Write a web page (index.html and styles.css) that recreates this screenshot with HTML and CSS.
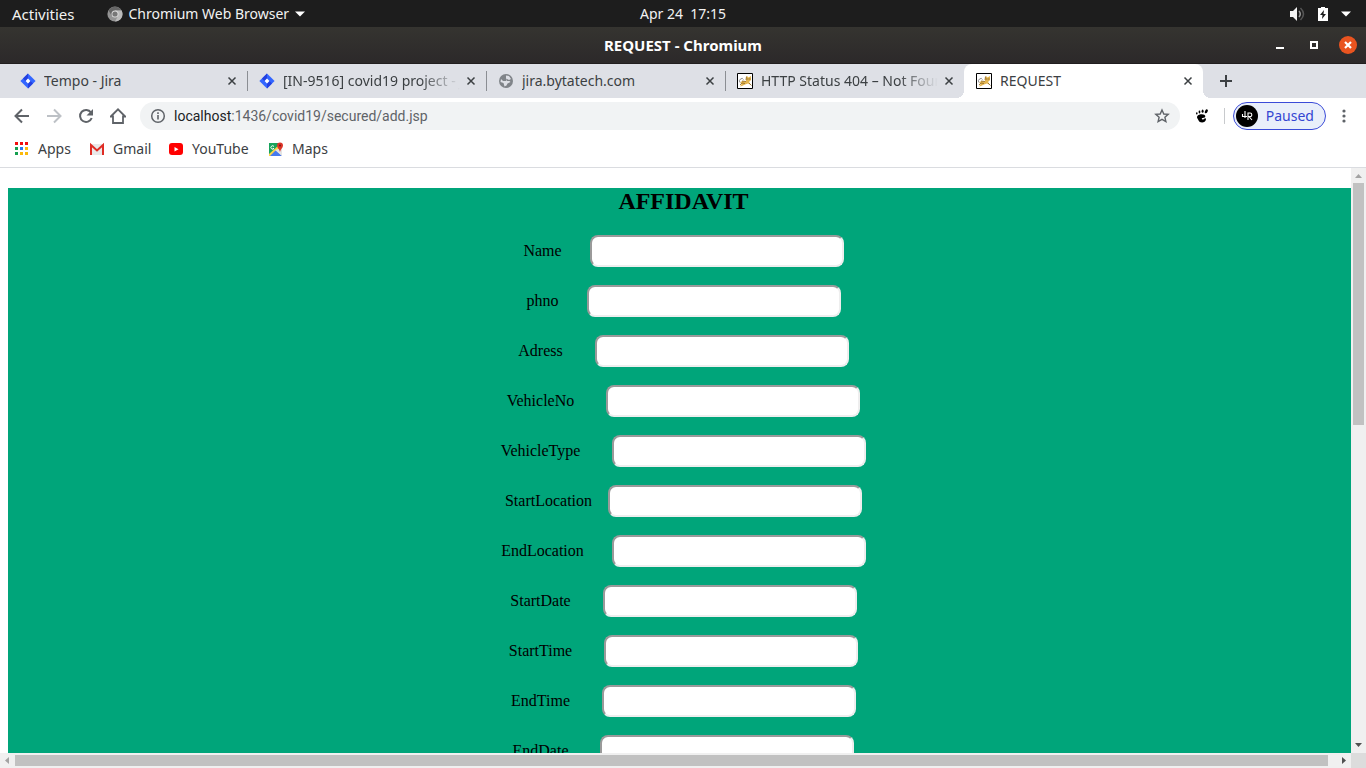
FILE: index.html
```html
<!DOCTYPE html>
<html lang="en">
<head>
<meta charset="utf-8">
<title>REQUEST</title>
<link rel="stylesheet" href="styles.css">
</head>
<body>
<svg class="defs" aria-hidden="true">
  <symbol id="close" viewBox="0 0 10 10"><path d="M1.500 1.500l7 7M8.500 1.500l-7 7" stroke="currentColor" stroke-width="1.500" fill="none"/></symbol>
  <symbol id="jira" viewBox="0 0 16 16"><path d="M8 .4L15.6 8 8 15.6.4 8z" fill="#3366ff"/><path d="M8 .4v5L5.4 8 3 5.4zM8 15.6v-5L10.6 8l2.4 2.600z" fill="#2440e0"/><path d="M8 5.600L10.400 8 8 10.400 5.600 8z" fill="#fff"/></symbol>
  <symbol id="tomcat" viewBox="0 0 16 16"><path d="M.5.5h15v15H.5z" fill="#fff" stroke="#000"/><path d="M3 10l2-2 4 .5V5l1-2 1.500 1.500L14 3v4l-2 2 2 3-3-1.500-3 1-3 1.500-2 .5L5 10.500z" fill="#e5b650"/><path d="M3 12l2-2 3 .5M12 10l2.500 2.500M9 8.500l-4-.5M9.500 3.500L9 7" stroke="#8a6420" stroke-width=".8" fill="none"/><path d="M3 9.500Q1.500 7.500 3.500 6t3 .5" stroke="#8b8b8b" fill="none"/><path d="M10.500 6h.8M12.500 6h.8" stroke="#4a3a1c"/></symbol>
</svg>

<header class="panel">
  <button class="panel-btn activities" type="button">Activities</button>
  <button class="panel-btn panel-app" type="button">
    <svg width="16" height="16" viewBox="0 0 16 16"><circle cx="8" cy="8" r="7.600" fill="#949494"/><path d="M1.400 4.500A7.600 7.600 0 0 1 14.600 4.500H8L5 10z" fill="#666"/><path d="M14.600 4.500A7.600 7.600 0 0 1 8 15.600L11 10 8 4.500z" fill="#bbb"/><circle cx="8" cy="8" r="3.500" fill="#ddd"/><circle cx="8" cy="8" r="2.600" fill="#777"/></svg>
    <span>Chromium Web Browser</span>
    <svg width="10" height="6" viewBox="0 0 10 6"><path d="M0 .5h10L5 5.500z" fill="#fff"/></svg>
  </button>
  <time class="clock">Apr 24&nbsp; 17:15</time>
  <div class="status">
    <svg width="16" height="16" viewBox="0 0 16 16"><path d="M1 5h3l4-4v14l-4-4H1z" fill="#f4f4f4"/><path d="M10 5q2.500 3 0 6" stroke="#999" stroke-width="1.500" fill="none"/><path d="M11.500 2q6 6 0 12" stroke="#555" stroke-width="1.500" fill="none"/></svg>
    <svg width="10" height="14" viewBox="0 0 10 14"><path d="M0 1h3V0h4v1h3v13H0z" fill="#fff"/><path d="M6 3L2 8h2.500L4 12l4-5H5.500z" fill="#1d1d1d"/></svg>
    <svg width="10" height="6" viewBox="0 0 10 6"><path d="M0 .5h10L5 5.500z" fill="#fff"/></svg>
  </div>
</header>

<div class="titlebar">
  <strong class="window-title">REQUEST - Chromium</strong>
  <div class="window-controls">
    <button type="button" aria-label="Minimize"><svg width="8" height="8" viewBox="0 0 8 8"><path d="M0 6h8v2H0z" fill="#fff"/></svg></button>
    <button type="button" aria-label="Maximize"><svg width="8" height="8" viewBox="0 0 8 8"><path d="M1 1h6v6H1z" stroke="#fff" stroke-width="2" fill="none"/></svg></button>
    <button class="window-close" type="button" aria-label="Close window"><svg width="8" height="8" viewBox="0 0 8 8"><path d="M1 1l6 6M7 1L1 7" stroke="#fff" stroke-width="2.200"/></svg></button>
  </div>
</div>

<nav class="tabs" aria-label="Tabs">
  <div class="tab"><svg class="fav"><use href="#jira"/></svg><span class="tab-title">Tempo - Jira</span><button type="button" aria-label="Close tab"><svg class="x"><use href="#close"/></svg></button></div>
  <div class="tab"><svg class="fav"><use href="#jira"/></svg><span class="tab-title faded">[IN-9516] covid19 project - Jira</span><button type="button" aria-label="Close tab"><svg class="x"><use href="#close"/></svg></button></div>
  <div class="tab"><svg class="fav" viewBox="0 0 16 16"><circle cx="8" cy="8" r="7" fill="#808489"/><path d="M8 2.500l3 .5 2 3-2 1-2-1-1 2H5L3 6 2.500 9l3 1 1 3.500 2-1 1-2 3-1.500-1-1H9L8 5z" fill="#dee0e6"/></svg><span class="tab-title">jira.bytatech.com</span><button type="button" aria-label="Close tab"><svg class="x"><use href="#close"/></svg></button></div>
  <div class="tab"><svg class="fav"><use href="#tomcat"/></svg><span class="tab-title faded">HTTP Status 404 – Not Found</span><button type="button" aria-label="Close tab"><svg class="x"><use href="#close"/></svg></button></div>
  <div class="tab active"><svg class="fav"><use href="#tomcat"/></svg><span class="tab-title">REQUEST</span><button type="button" aria-label="Close tab"><svg class="x"><use href="#close"/></svg></button></div>
  <button class="new-tab" type="button" aria-label="New tab"><svg width="12" height="12" viewBox="0 0 12 12"><path d="M6 0v12M0 6h12" stroke="#3c4043" stroke-width="2"/></svg></button>
</nav>

<div class="toolbar">
  <div class="nav-buttons">
    <button type="button" aria-label="Back"><svg width="16" height="16" viewBox="0 0 16 16"><path d="M15 8H2M8 1.500L1.500 8 8 14.500" stroke="#5f6368" stroke-width="2" fill="none"/></svg></button>
    <button type="button" aria-label="Forward"><svg width="16" height="16" viewBox="0 0 16 16"><path d="M1 8h13M8 1.500L14.500 8 8 14.500" stroke="#bdc1c6" stroke-width="2" fill="none"/></svg></button>
    <button type="button" aria-label="Reload"><svg width="16" height="16" viewBox="0 0 16 16"><path d="M13 4.500A6 6 0 1 0 13.700 10" stroke="#5f6368" stroke-width="2" fill="none"/><path d="M15 1v6.500H8.500z" fill="#5f6368"/></svg></button>
    <button type="button" aria-label="Home"><svg width="16" height="16" viewBox="0 0 16 16"><path d="M.8 8.500L8 1.300l7.200 7.200H13V15H3V8.500z" stroke="#5f6368" stroke-width="1.800" fill="none"/></svg></button>
  </div>
  <div class="omnibox">
    <svg width="16" height="16" viewBox="0 0 16 16"><circle cx="8" cy="8" r="6.300" stroke="#5f6368" stroke-width="1.500" fill="none"/><path d="M8 7v4.500M8 4.300V6" stroke="#5f6368" stroke-width="1.600"/></svg>
    <span class="url" role="textbox" aria-label="Address" contenteditable="true"><span class="host">localhost</span>:1436/covid19/secured/add.jsp</span>
    <button type="button" aria-label="Bookmark this page"><svg width="16" height="16" viewBox="0 0 16 16"><path d="M8 2l1.800 4 4.400.4-3.300 2.900 1 4.300L8 11.400l-3.900 2.200 1-4.300-3.300-2.900L6.200 6z" stroke="#5f6368" stroke-width="1.400" fill="none"/></svg></button>
  </div>
  <button class="extension" type="button" aria-label="GNOME extension"><svg width="14" height="16" viewBox="0 0 14 16"><path d="M2.200 8.200C4 5.500 10.500 5.700 10.300 8.300 10 10.600 7 9.300 6.800 10.800c0 1.200 2 .7 2.700-.3.500-.6 1.700-.2 1.500.8-.6 4-6.500 4.300-7.700.7-.5-1.500-1.800-2.300-1.100-3.800z"/><ellipse cx="11.300" cy="3.300" rx="1.300" ry="2.200" transform="rotate(30 11.300 3.300)"/><ellipse cx="7.600" cy="3.200" rx="1" ry="1.600"/><ellipse cx="4.500" cy="4" rx=".9" ry="1.400"/><ellipse cx="1.800" cy="5.400" rx=".8" ry="1.100"/></svg></button>
  <span class="divider"></span>
  <button class="profile" type="button">
    <svg width="22" height="22" viewBox="0 0 22 22"><circle cx="11" cy="11" r="11"/><path d="M9 6v7M6.500 9v2.500H11M12 15V8h2q1.800 0 1.800 1.800T14 11.500h-1l3 3.500" stroke="#fff" stroke-width="1.100" fill="none"/></svg>
    <span>Paused</span>
  </button>
  <button class="menu" type="button" aria-label="Menu"><svg width="4" height="14" viewBox="0 0 4 14"><circle cx="2" cy="2" r="1.600"/><circle cx="2" cy="7" r="1.600"/><circle cx="2" cy="12" r="1.600"/></svg></button>
</div>

<nav class="bookmarks" aria-label="Bookmarks">
  <a class="w-apps" href="#apps"><svg width="14" height="14" viewBox="0 0 14 14"><path d="M0 0h3v3H0zM5 0h3v3H5zM10 0h3v3h-3z" fill="#f20d0d"/><path d="M0 5h3v3H0zM0 10h3v3H0z" fill="#159f50"/><path d="M5 5h3v3H5z" fill="#2878f0"/><path d="M10 5h3v3h-3zM5 10h3v3H5zM10 10h3v3h-3z" fill="#fbb90b"/></svg>Apps</a>
  <a class="w-gmail" href="#gmail"><svg width="14" height="14" viewBox="0 0 14 14"><path d="M0 2h14v11H0z" fill="#e9e9e9"/><path d="M1 13V3l6 5.500L13 3v10" stroke="#df2c24" stroke-width="2" fill="none"/></svg>Gmail</a>
  <a class="w-youtube" href="#youtube"><svg width="14" height="14" viewBox="0 0 14 14"><rect y="1" width="14" height="12" rx="3" fill="#f00"/><path d="M5.500 5v4.500l4-2.200z" fill="#fff"/></svg>YouTube</a>
  <a href="#maps"><svg width="14" height="14" viewBox="0 0 14 14"><path d="M0 1h13v13H0z" fill="#ddd"/><path d="M0 1h9v5L1 14H0z" fill="#18a35c"/><path d="M0 12L10 3l3 3-8 8H0z" fill="#fbd449"/><path d="M1 14l6-6 6 6z" fill="#4679ee"/><path d="M6 8l7 6V6z" fill="#e4e4e4"/><path d="M11 10C10.500 7 8 6 8 3.500a3 3 0 0 1 6 0C14 6 11.500 7 11 10z" fill="#dc3428"/><circle cx="11" cy="3.500" r="1" fill="#7d1710"/><path d="M5 4.500A1.700 1.700 0 1 0 5 6.500H3.700" stroke="#fff" fill="none"/></svg>Maps</a>
</nav>

<div class="viewport">
  <main class="page">
    <form class="affidavit">
      <h1>AFFIDAVIT</h1>
      <div class="row gap-m"><label for="name">Name</label><input id="name" type="text"></div>
      <div class="row gap-m"><label for="phno">phno</label><input id="phno" type="text"></div>
      <div class="row"><label for="adress">Adress</label><input id="adress" type="text"></div>
      <div class="row"><label for="vno">VehicleNo</label><input id="vno" type="text"></div>
      <div class="row"><label for="vtype">VehicleType</label><input id="vtype" type="text"></div>
      <div class="row gap-s"><label for="sloc">StartLocation</label><input id="sloc" type="text"></div>
      <div class="row gap-m"><label for="eloc">EndLocation</label><input id="eloc" type="text"></div>
      <div class="row"><label for="sdate">StartDate</label><input id="sdate" type="text"></div>
      <div class="row"><label for="stime">StartTime</label><input id="stime" type="text"></div>
      <div class="row"><label for="etime">EndTime</label><input id="etime" type="text"></div>
      <div class="row"><label for="edate">EndDate</label><input id="edate" type="text"></div>
    </form>
  </main>
  <div class="scroll-y">
    <svg viewBox="0 0 15 15"><path d="M4 10h7L7.500 6z" fill="#a3a3a3"/></svg>
    <div class="track"><div class="thumb"></div></div>
    <svg viewBox="0 0 15 15"><path d="M4 5h7L7.500 9z" fill="#505050"/></svg>
  </div>
  <div class="scroll-x">
    <svg viewBox="0 0 15 15"><path d="M9 4v7L5 7.500z" fill="#a3a3a3"/></svg>
    <div class="track"><div class="thumb"></div></div>
    <svg viewBox="0 0 15 15"><path d="M6 4v7l4-3.500z" fill="#505050"/></svg>
  </div>
  <div class="corner"></div>
</div>
</body>
</html>
```

FILE: styles.css
```css
* { box-sizing: border-box; }

body {
  margin: 0;
  height: 100vh;
  display: flex;
  flex-direction: column;
  overflow: hidden;
  background: #fff;
  color: #3c4043;
  font: 14px/20px "Noto Sans", "Open Sans", sans-serif;
}

body > * { flex: none; }

button {
  display: inline-flex;
  align-items: center;
  justify-content: center;
  padding: 0;
  border: 0;
  background: none;
  color: inherit;
  font: inherit;
}

svg { display: block; flex: none; }
.defs { position: absolute; width: 0; height: 0; }

/* Desktop panel */
.panel {
  display: grid;
  grid-template-columns: auto auto 1fr;
  position: relative;
  align-items: center;
  height: 27px;
  padding: 0 15px 0 12px;
  background: #1d1d1d;
  color: #f2f2f2;
}
.activities { font-size: 15px; }
.panel-app { gap: 6px; margin-left: 32px; }
.clock {
  position: absolute;
  left: 50%;
  transform: translateX(-50%);
}
.status { display: flex; justify-content: flex-end; align-items: center; gap: 13px; }

/* Window frame */
.titlebar {
  display: grid;
  grid-template-columns: 1fr auto 1fr;
  align-items: center;
  height: 37px;
  padding-right: 9px;
  background: linear-gradient(#353430, #2c292a);
  border-bottom: 1px solid #211e1f;
  color: #fff;
}
.window-title { grid-column: 2; padding-left: 9px; font-size: 15px; }
.window-controls { display: flex; justify-content: flex-end; gap: 16px; }
.window-controls button { width: 18px; height: 18px; border-radius: 50%; }
.window-controls .window-close { background: #e95420; }

/* Tab strip */
.tabs {
  display: flex;
  height: 34px;
  padding-left: 8px;
  background: #dee0e6;
}
.tab {
  flex: 0 1 239px;
  min-width: 0;
  display: flex;
  align-items: center;
  padding: 0 10px 0 12px;
  position: relative;
}
.tab:not(.active)::after {
  content: "";
  position: absolute;
  right: -1px;
  top: 7px;
  height: 20px;
  width: 1px;
  background: #8b8e93;
}
.tab:nth-child(4)::after { display: none; }
.fav { width: 16px; height: 16px; margin-right: 8px; }
.x { width: 10px; height: 10px; }
.tab-title {
  flex: 1;
  min-width: 0;
  margin-right: 6px;
  overflow: hidden;
  white-space: nowrap;
}
.faded {
  -webkit-mask-image: linear-gradient(to left, transparent, #000 40px);
  mask-image: linear-gradient(to left, transparent, #000 40px);
}
.tab.active { background: #fff; border-radius: 8px 8px 0 0; }
.active::before, .active::after {
  content: "";
  position: absolute;
  bottom: 0;
  width: 8px;
  height: 8px;
}
.active::before { right: 100%; background: radial-gradient(circle at 0 0, #dee0e6 8px, #fff 8px); }
.active::after { left: 100%; background: radial-gradient(circle at 100% 0, #dee0e6 8px, #fff 8px); }
.new-tab { margin-left: 17px; }

/* Toolbar */
.toolbar {
  display: flex;
  align-items: center;
  height: 36px;
  padding: 0 20px 0 14px;
}
.nav-buttons { display: flex; gap: 16px; margin-right: 14px; }
.omnibox {
  flex: 1;
  display: flex;
  align-items: center;
  gap: 8px;
  height: 28px;
  padding: 0 10px;
  border-radius: 14px;
  background: #f1f3f4;
}
.url {
  flex: 1;
  color: #5f6368;
  font-family: Roboto, "Noto Sans", sans-serif;
  white-space: nowrap;
}
.host { color: #202124; }
.extension { margin: 0 15px; }
.divider { width: 1px; height: 16px; background: #c8cacd; }
.profile {
  gap: 8px;
  height: 28px;
  margin: 0 16px 0 8px;
  padding: 0 11px 0 2px;
  border: 1px solid #3b4bd8;
  border-radius: 14px;
  background: #e9effa;
  color: #3446d2;
}
.menu { fill: #5f6368; }

/* Bookmarks */
.bookmarks {
  display: flex;
  align-items: center;
  height: 34px;
  padding: 0 15px 4px;
  border-bottom: 1px solid #dadce0;
}
.bookmarks a {
  display: flex;
  align-items: center;
  gap: 9px;
  color: inherit;
  text-decoration: none;
}
.w-apps { width: 75px; }
.w-gmail { width: 79px; }
.w-youtube { width: 100px; }

/* Page area */
.viewport {
  flex: 1;
  min-height: 0;
  display: grid;
  grid-template: minmax(0, 1fr) 15px / minmax(0, 1fr) 15px;
}
.page {
  overflow: hidden;
  padding: 20px 0 0 8px;
  color: #000;
  font: 16px/18px "Liberation Serif", "Times New Roman", serif;
}
.affidavit {
  width: calc(100% + 8px);
  display: flex;
  flex-direction: column;
  gap: 18px;
  padding-bottom: 18px;
  background: #00a57a;
}
.affidavit h1 {
  margin: 0 0 2px;
  font-size: 24px;
  line-height: 27px;
  text-align: center;
}
.row {
  display: flex;
  justify-content: center;
  align-items: center;
  gap: 32px;
}
.gap-m { gap: 28px; }
.gap-s { gap: 16px; }
.row input {
  width: 254px;
  height: 32px;
  padding: 1px 6px;
  border: 2px solid;
  border-color: #9a9a9a #eee #eee #9a9a9a;
  border-radius: 8px;
  background: #fff;
  font: inherit;
}

/* Scroll bars */
.scroll-y, .scroll-x { display: flex; background: #f0f0f0; }
.scroll-y { flex-direction: column; }
.scroll-x { grid-row: 2; }
.scroll-y svg, .scroll-x svg { width: 15px; height: 15px; }
.track { flex: 1; }
.thumb { background: #c1c1c1; }
.scroll-y .track { padding: 0 2px; }
.scroll-y .thumb { height: 43.6%; }
.scroll-x .track { padding: 2px 0; }
.scroll-x .thumb { width: 99.4%; height: 100%; }
.corner { background: #dcdcdc; }
```
